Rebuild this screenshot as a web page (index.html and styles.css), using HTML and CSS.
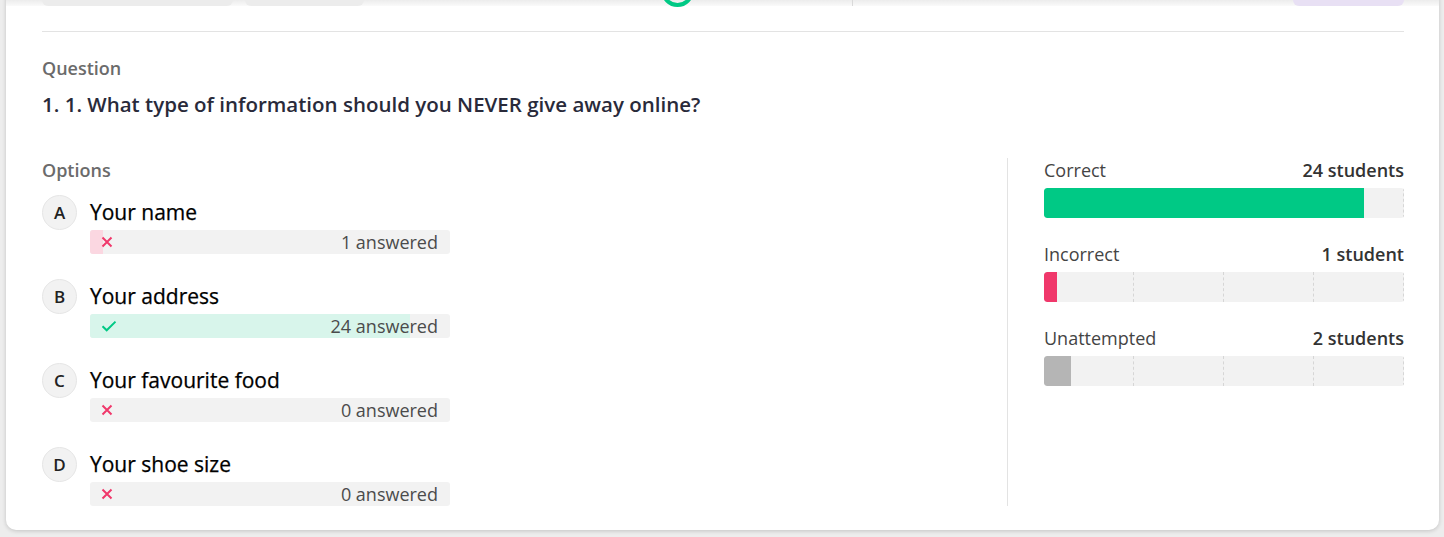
FILE: index.html
```html
<!DOCTYPE html>
<html lang="en">

<head>
    <meta charset="UTF-8">
    <meta name="viewport" content="width=device-width, initial-scale=1.0">
    <title>Question report</title>
    <link rel="stylesheet" href="styles.css">
</head>

<body>

    <div class="card">

        <div class="head">
            <div class="pill pill-wide"></div>
            <div class="pill pill-short"></div>
            <div class="ring"></div>
            <div class="vline"></div>
            <div class="pill pill-lilac"></div>
        </div>

        <div class="divider"></div>

        <div class="label">Question</div>
        <div class="question">1. 1. What type of information should you NEVER give away online?</div>

        <div class="main">

            <div class="options">
                <div class="label">Options</div>

                <div class="option first">
                    <div class="letter">A</div>
                    <div class="name">Your name</div>
                    <div class="answer">
                        <div class="answer-fill wrong" style="width: 13px;"></div>
                        <span class="mark">
                            <svg width="12" height="12" viewBox="0 0 12 12"><path d="M1.5 1.5l9 9M10.5 1.5l-9 9" stroke="#f0386b" stroke-width="2"/></svg>
                        </span>
                        <span class="count">1 answered</span>
                    </div>
                </div>

                <div class="option">
                    <div class="letter">B</div>
                    <div class="name">Your address</div>
                    <div class="answer">
                        <div class="answer-fill right" style="width: 320px;"></div>
                        <span class="mark">
                            <svg width="16" height="12" viewBox="0 0 16 12"><path d="M1.5 6.2l4.2 4.1L14.5 1.6" fill="none" stroke="#00c985" stroke-width="2"/></svg>
                        </span>
                        <span class="count">24 answered</span>
                    </div>
                </div>

                <div class="option">
                    <div class="letter">C</div>
                    <div class="name">Your favourite food</div>
                    <div class="answer">
                        <span class="mark">
                            <svg width="12" height="12" viewBox="0 0 12 12"><path d="M1.5 1.5l9 9M10.5 1.5l-9 9" stroke="#f0386b" stroke-width="2"/></svg>
                        </span>
                        <span class="count">0 answered</span>
                    </div>
                </div>

                <div class="option">
                    <div class="letter">D</div>
                    <div class="name">Your shoe size</div>
                    <div class="answer">
                        <span class="mark">
                            <svg width="12" height="12" viewBox="0 0 12 12"><path d="M1.5 1.5l9 9M10.5 1.5l-9 9" stroke="#f0386b" stroke-width="2"/></svg>
                        </span>
                        <span class="count">0 answered</span>
                    </div>
                </div>
            </div>

            <div class="stats">

                <div class="stat">
                    <div class="stat-top">
                        <span>Correct</span>
                        <b>24 students</b>
                    </div>
                    <div class="bar">
                        <div class="tick"></div>
                        <div class="tick"></div>
                        <div class="tick"></div>
                        <div class="tick"></div>
                        <div class="bar-fill green" style="width: 320px;"></div>
                    </div>
                </div>

                <div class="stat">
                    <div class="stat-top">
                        <span>Incorrect</span>
                        <b>1 student</b>
                    </div>
                    <div class="bar">
                        <div class="tick"></div>
                        <div class="tick"></div>
                        <div class="tick"></div>
                        <div class="tick"></div>
                        <div class="bar-fill red" style="width: 13px;"></div>
                    </div>
                </div>

                <div class="stat">
                    <div class="stat-top">
                        <span>Unattempted</span>
                        <b>2 students</b>
                    </div>
                    <div class="bar">
                        <div class="tick"></div>
                        <div class="tick"></div>
                        <div class="tick"></div>
                        <div class="tick"></div>
                        <div class="bar-fill grey" style="width: 27px;"></div>
                    </div>
                </div>

            </div>

        </div>

    </div>

</body>

</html>
```

FILE: styles.css
```css
body {
    margin: 0;
    padding: 0 5px 7px 6px;
    background-color: #ededed;
    font-family: "Open Sans", "Noto Sans", sans-serif;
    overflow: hidden;
}

.card {
    margin-top: -30px;
    padding: 0 35px 24px 36px;
    background-color: #ffffff;
    border-radius: 0 0 10px 10px;
    box-shadow: 0 1px 4px rgba(0, 0, 0, 0.18);
}

.head {
    height: 36px;
    display: flex;
    align-items: flex-end;
    background: linear-gradient(to bottom, #ffffff 0, #ffffff 26px, #ececec 30px, #ffffff 38px);
    margin: 0 -35px 0 -36px;
    padding: 0 35px 0 36px;
}

.pill {
    height: 30px;
    border-radius: 6px;
    background-color: #ececec;
}

.pill-wide {
    width: 191px;
}

.pill-short {
    width: 119px;
    margin-left: 12px;
}

.pill-lilac {
    width: 111px;
    margin-left: auto;
    background-color: #e8e0f4;
}

.ring {
    width: 25px;
    height: 25px;
    margin-left: 297px;
    margin-bottom: -1px;
    border: 4px solid #00c985;
    border-radius: 50%;
}

.vline {
    width: 1px;
    height: 20px;
    margin-left: 158px;
    background-color: #d9d9d9;
}

.divider {
    height: 1px;
    margin-top: 25px;
    background-color: #e3e3e3;
}

.label {
    margin-top: 24px;
    font-size: 18px;
    line-height: 24px;
    font-weight: 600;
    color: #6b6b6b;
}

.question {
    margin-top: 10px;
    font-size: 20.5px;
    line-height: 28px;
    font-weight: 600;
    color: #292a3a;
}

.main {
    display: flex;
    margin-top: 40px;
}

.main .label {
    margin-top: 0;
}

.options {
    flex: 1;
}

.option {
    display: grid;
    grid-template-columns: 48px 360px;
    margin-top: 25px;
}

.option.first {
    margin-top: 13px;
}

.letter {
    width: 33px;
    height: 33px;
    border: 1px solid #e6e6e6;
    border-radius: 50%;
    background-color: #f2f2f2;
    display: flex;
    align-items: center;
    justify-content: center;
    font-size: 17px;
    font-weight: 600;
    color: #222;
}

.name {
    font-size: 21px;
    line-height: 35px;
    color: #000;
    -webkit-text-stroke: 0.25px #000;
}

.answer {
    grid-column: 2;
    position: relative;
    height: 24px;
    display: flex;
    align-items: center;
    justify-content: space-between;
    padding: 0 12px 0 11px;
    border-radius: 3px;
    background-color: #f2f2f2;
    overflow: hidden;
}

.answer-fill {
    position: absolute;
    left: 0;
    top: 0;
    bottom: 0;
}

.answer-fill.wrong {
    background-color: #fbd7e1;
}

.answer-fill.right {
    background-color: #d8f5eb;
}

.mark {
    position: relative;
    display: flex;
    align-items: center;
    width: 16px;
}

.count {
    position: relative;
    font-size: 18px;
    color: #4b4b4b;
}

.stats {
    width: 360px;
    padding-left: 36px;
    border-left: 1px solid #e3e3e3;
}

.stat {
    margin-bottom: 24px;
}

.stat-top {
    display: flex;
    justify-content: space-between;
    font-size: 18px;
    line-height: 24px;
    color: #444;
}

.stat-top b {
    font-weight: 600;
    color: #333;
}

.bar {
    position: relative;
    display: flex;
    height: 30px;
    margin-top: 6px;
    border-radius: 3px;
    background-color: #f2f2f2;
    overflow: hidden;
}

.tick {
    flex: 1;
    border-right: 1px dashed #d6d6d6;
}

.tick:last-of-type {
    border-right: none;
}

.bar-fill {
    position: absolute;
    left: 0;
    top: 0;
    bottom: 0;
    border-radius: 3px 0 0 3px;
}

.green {
    background-color: #00c985;
}

.red {
    background-color: #f0386b;
}

.grey {
    background-color: #b5b5b5;
}
```
